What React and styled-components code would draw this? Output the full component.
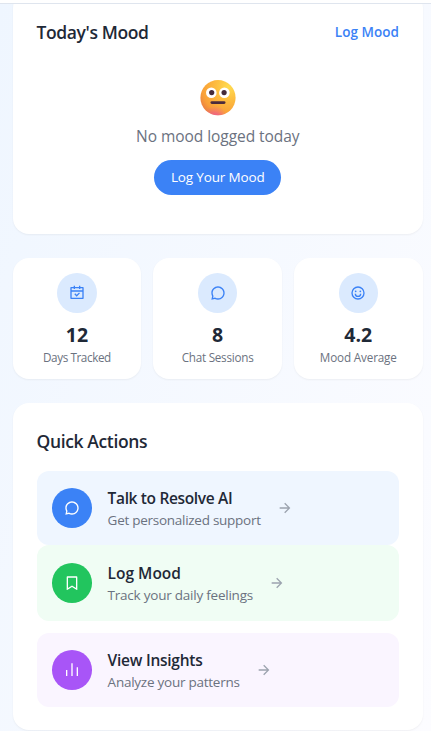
import React from 'react';
import styled, { createGlobalStyle } from 'styled-components';
import {
  RiCalendarCheckLine,
  RiChat3Line,
  RiBookmarkLine,
  RiBarChartLine,
  RiArrowRightLine,
} from 'react-icons/ri';

const GlobalStyle = createGlobalStyle`
  *, *::before, *::after { box-sizing: border-box; }
  html { overflow: hidden; }
  body {
    margin: 0;
    font-family: "Segoe UI", "Open Sans", "Noto Sans", sans-serif;
    color: #1f2937;
  }
  h2, h3, p { margin: 0; }
  button { font: inherit; border: 0; cursor: pointer; }
`;

const Page = styled.div`
  height: 731px;
  overflow: hidden;
  background: linear-gradient(110deg, #eff6ff 0%, #fcfcff 100%);
`;

const Header = styled.header`
  position: relative;
  z-index: 1;
  height: 4px;
  background: #fff;
  border-bottom: 1px solid #dfe5ee;
`;

const Content = styled.main`
  display: flex;
  flex-direction: column;
  width: 410px;
  margin: -12.5px 0 0 12.6px;
`;

const Card = styled.section`
  background: #fff;
  border-radius: 16px;
  box-shadow: 0 1px 2px rgba(0, 0, 0, 0.05);
`;

const MoodCard = styled(Card)`
  height: 242.5px;
  padding: 24.5px 23.6px 0 24px;
`;

const MoodHeader = styled.div`
  display: flex;
  align-items: center;
  justify-content: space-between;
  height: 32px;
`;

const Title = styled.h2`
  font-size: 17.5px;
  line-height: 28px;
  font-weight: 600;
  letter-spacing: ${(p) => p.$track || 0}px;
  white-space: nowrap;
`;

const LinkButton = styled.button`
  padding: 0;
  background: none;
  color: #3b82f6;
  font-size: 13.5px;
  line-height: 20px;
  font-weight: 600;
  letter-spacing: 0.04px;
`;

const EmptyMood = styled.div`
  display: flex;
  flex-direction: column;
  align-items: center;
  padding-top: 31.9px;
`;

const EmptyText = styled.p`
  margin-top: 8.2px;
  color: #6b7280;
  font-size: 15.5px;
  line-height: 24px;
  letter-spacing: -0.05px;
  white-space: nowrap;
`;

const PrimaryButton = styled.button`
  width: 127px;
  height: 35.5px;
  margin-top: 11.6px;
  padding: 0;
  border-radius: 18px;
  background: #3b82f6;
  color: #fff;
  font-size: 13.5px;
  line-height: 20px;
  font-weight: 500;
  letter-spacing: -0.14px;
  white-space: nowrap;
`;

const Stats = styled.section`
  display: grid;
  grid-template-columns: repeat(3, 1fr);
  gap: 12px;
  margin-top: 23.5px;
`;

const StatCard = styled(Card)`
  display: flex;
  flex-direction: column;
  align-items: center;
  height: 121.5px;
  padding-top: 15.5px;
`;

const StatIcon = styled.div`
  display: flex;
  align-items: center;
  justify-content: center;
  width: 39.5px;
  height: 40px;
  border-radius: 50%;
  background: #dbeafe;
  color: #3b82f6;
  font-size: 16px;
  padding-bottom: 1px;
`;

const StatValue = styled.div`
  margin-top: 8px;
  font-size: 19.5px;
  line-height: 28px;
  font-weight: 700;
`;

const StatLabel = styled.div`
  color: #6b7280;
  font-size: 11.7px;
  line-height: 16px;
  letter-spacing: ${(p) => p.$track}px;
  white-space: nowrap;
`;

const ActionsCard = styled(Card)`
  height: 327px;
  margin-top: 24px;
  padding: 23.7px 23.5px 0 24px;
`;

const ActionList = styled.div`
  display: flex;
  flex-direction: column;
  margin-top: 16px;
`;

const Action = styled.div`
  display: flex;
  align-items: center;
  height: ${(p) => p.$height}px;
  margin-top: ${(p) => p.$gap}px;
  padding-left: 15px;
  border-radius: 12px;
  background: ${(p) => p.$bg};
`;

const ActionIcon = styled.div`
  display: flex;
  align-items: center;
  justify-content: center;
  width: 40.5px;
  height: 40px;
  border-radius: 50%;
  background: ${(p) => p.$color};
  color: #fff;
  font-size: 16px;
`;

const ActionText = styled.div`
  width: ${(p) => p.$width}px;
  margin-left: 15.5px;
  padding-top: 2px;
  white-space: nowrap;
`;

const ActionTitle = styled.h3`
  font-size: 15.5px;
  line-height: 22px;
  font-weight: 600;
  letter-spacing: ${(p) => p.$track}px;
`;

const ActionNote = styled.p`
  color: #6b7280;
  font-size: 13.5px;
  line-height: 22px;
  letter-spacing: ${(p) => p.$track}px;
`;

const Arrow = styled(RiArrowRightLine)`
  margin-left: 16px;
  color: #9ca3af;
  font-size: 16px;
`;

function SmileIcon() {
  return (
    <svg width="16" height="16" viewBox="0 0 24 24" fill="none" stroke="currentColor" strokeWidth="2" aria-hidden="true">
      <circle cx="12" cy="12" r="9" />
      <path d="M8 13a4 4 0 0 0 8 0" />
      <circle cx="8.5" cy="9.5" r="1.3" fill="currentColor" stroke="none" />
      <circle cx="15.5" cy="9.5" r="1.3" fill="currentColor" stroke="none" />
    </svg>
  );
}

const stats = [
  { Icon: RiCalendarCheckLine, value: '12', label: 'Days Tracked', track: -0.4 },
  { Icon: RiChat3Line, value: '8', label: 'Chat Sessions', track: -0.25 },
  { Icon: SmileIcon, value: '4.2', label: 'Mood Average', track: -0.15 },
];

const actions = [
  { Icon: RiChat3Line, title: 'Talk to Resolve AI', note: 'Get personalized support', bg: '#eff6ff', color: '#3b82f6', width: 153, height: 74.5, gap: 0, titleTrack: -0.35, noteTrack: -0.27 },
  { Icon: RiBookmarkLine, title: 'Log Mood', note: 'Track your daily feelings', bg: '#f0fdf4', color: '#22c55e', width: 145, height: 75.5, gap: 0, titleTrack: 0, noteTrack: -0.23 },
  { Icon: RiBarChartLine, title: 'View Insights', note: 'Analyze your patterns', bg: '#faf5ff', color: '#a855f7', width: 132, height: 74.5, gap: 12, titleTrack: -0.25, noteTrack: -0.25 },
];

function NeutralFace() {
  return (
    <svg width="36" height="36" viewBox="0 0 36 36" aria-label="Neutral face">
      <defs>
        <radialGradient id="faceFill" cx="0.8" cy="0.2" r="0.95">
          <stop offset="0" stopColor="#ffdc4f" />
          <stop offset="0.4" stopColor="#fdbc3f" />
          <stop offset="0.8" stopColor="#f99f38" />
          <stop offset="1" stopColor="#e97c43" />
        </radialGradient>
        <radialGradient id="faceGlow" cx="0.42" cy="1.08" r="0.35">
          <stop offset="0" stopColor="#f0569c" />
          <stop offset="1" stopColor="#f0569c" stopOpacity="0" />
        </radialGradient>
      </defs>
      <circle cx="18" cy="17.7" r="17.6" fill="url(#faceFill)" />
      <circle cx="18" cy="17.7" r="17.6" fill="url(#faceGlow)" />
      <circle cx="11.3" cy="12.7" r="5.3" fill="#fff" />
      <circle cx="24.4" cy="12.7" r="5.3" fill="#fff" />
      <circle cx="11.7" cy="12.6" r="2.6" fill="#442b3b" />
      <circle cx="24.1" cy="12.6" r="2.6" fill="#442b3b" />
      <rect x="10.5" y="21.2" width="15" height="2.7" rx="1.35" fill="#4b2b3c" />
    </svg>
  );
}

export default function App() {
  return (
    <>
      <GlobalStyle />
      <Page>
        <Header />
        <Content>
          <MoodCard>
            <MoodHeader>
              <Title $track={-0.4}>Today's Mood</Title>
              <LinkButton>Log Mood</LinkButton>
            </MoodHeader>
            <EmptyMood>
              <NeutralFace />
              <EmptyText>No mood logged today</EmptyText>
              <PrimaryButton>Log Your Mood</PrimaryButton>
            </EmptyMood>
          </MoodCard>
          <Stats>
            {stats.map(({ Icon, value, label, track }) => (
              <StatCard key={label}>
                <StatIcon><Icon /></StatIcon>
                <StatValue>{value}</StatValue>
                <StatLabel $track={track}>{label}</StatLabel>
              </StatCard>
            ))}
          </Stats>
          <ActionsCard>
            <Title $track={-0.38}>Quick Actions</Title>
            <ActionList>
              {actions.map(({ Icon, ...a }) => (
                <Action key={a.title} $bg={a.bg} $height={a.height} $gap={a.gap}>
                  <ActionIcon $color={a.color}><Icon /></ActionIcon>
                  <ActionText $width={a.width}>
                    <ActionTitle $track={a.titleTrack}>{a.title}</ActionTitle>
                    <ActionNote $track={a.noteTrack}>{a.note}</ActionNote>
                  </ActionText>
                  <Arrow />
                </Action>
              ))}
            </ActionList>
          </ActionsCard>
        </Content>
      </Page>
    </>
  );
}
